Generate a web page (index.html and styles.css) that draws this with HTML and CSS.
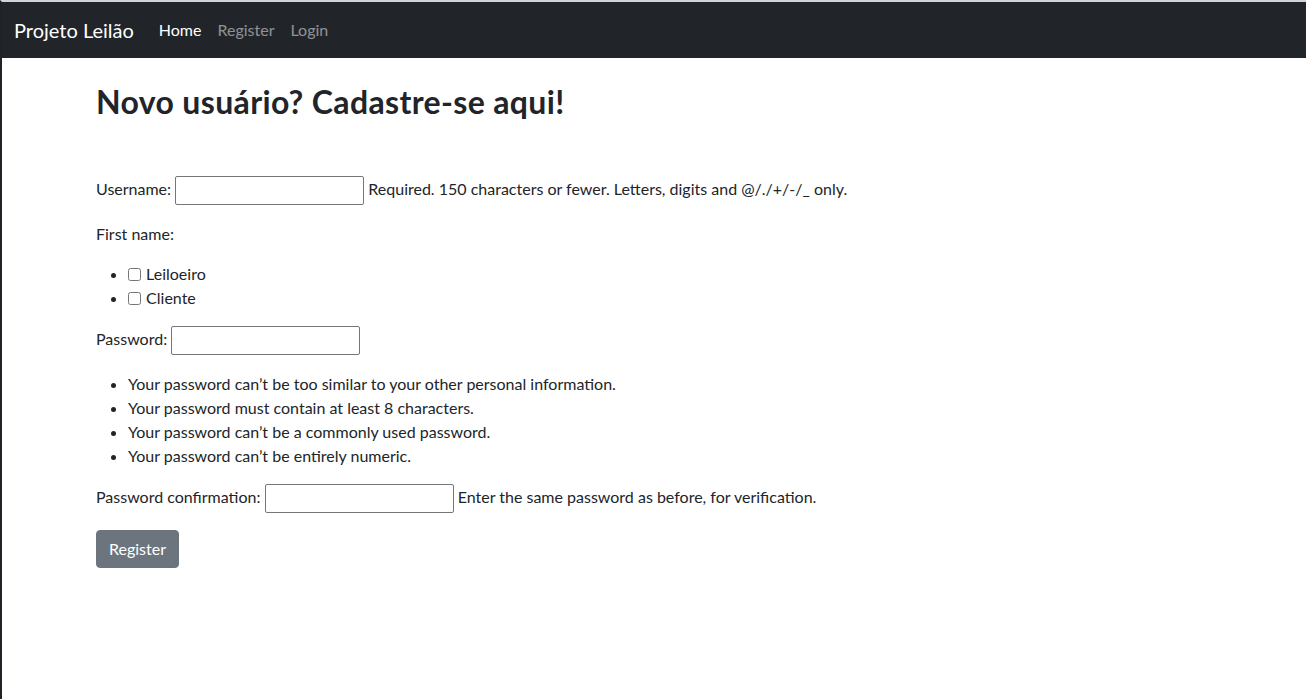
FILE: index.html
```html
<!DOCTYPE html>
<html lang="pt-br">
<head>
<meta charset="utf-8">
<title>Projeto Leilão</title>
<link rel="stylesheet" href="styles.css">
</head>
<body>
<div class="frame">
  <nav class="navbar">
    <a class="brand" href="#">Projeto Leilão</a>
    <ul class="nav">
      <li><a class="nav-link active" href="#">Home</a></li>
      <li><a class="nav-link" href="#">Register</a></li>
      <li><a class="nav-link" href="#">Login</a></li>
    </ul>
  </nav>
  <main class="container">
    <h1 class="title">Novo usuário? Cadastre-se aqui!</h1>
    <form class="form">
      <p class="row row-input"><label for="id_username">Username:</label> <input type="text" id="id_username" class="field"> <span class="helptext">Required. 150 characters or fewer. Letters, digits and @/./+/-/_ only.</span></p>
      <p class="row"><label>First name:</label></p>
      <ul class="list">
        <li><label><input type="checkbox" class="check"> Leiloeiro</label></li>
        <li><label><input type="checkbox" class="check"> Cliente</label></li>
      </ul>
      <p class="row row-input"><label for="id_password1">Password:</label> <input type="password" id="id_password1" class="field"></p>
      <ul class="list">
        <li>Your password can’t be too similar to your other personal information.</li>
        <li>Your password must contain at least 8 characters.</li>
        <li>Your password can’t be a commonly used password.</li>
        <li>Your password can’t be entirely numeric.</li>
      </ul>
      <p class="row row-input"><label for="id_password2">Password confirmation:</label> <input type="password" id="id_password2" class="field"> <span class="helptext">Enter the same password as before, for verification.</span></p>
      <button type="button" class="btn">Register</button>
    </form>
  </main>
</div>
</body>
</html>
```

FILE: styles.css
```css
* { box-sizing: border-box; }
html, body { margin: 0; padding: 0; height: 100%; }
body {
  font-family: "Lato", "Liberation Sans", sans-serif;
  font-size: 16px;
  line-height: 1.5;
  color: #212529;
  background: #fff;
}
.frame {
  min-height: 100%;
  border-top: 2px solid #cdd5d5;
  border-left: 2px solid #1f2226;
}
.navbar {
  display: flex;
  align-items: center;
  height: 56px;
  padding: 0 14px 0 12px;
  background: #212529;
}
.brand {
  color: #fff;
  text-decoration: none;
  font-size: 20px;
  line-height: 30px;
  margin-right: 17px;
}
.nav {
  display: flex;
  list-style: none;
  margin: 0;
  padding: 0;
}
.nav-link {
  display: block;
  padding: 8px 8px;
  color: rgba(255,255,255,.5);
  text-decoration: none;
}
.nav-link.active { color: #fff; }
.container {
  padding: 25px 0 0 94px;
}
.title {
  margin: 0 0 55px;
  font-size: 32px;
  font-weight: 700;
  line-height: 1.2;
  letter-spacing: 0.35px;
}
.form { margin: 0; }
.row { margin: 0 0 16px; }
.row-input { min-height: 30px; }
.field {
  width: 189px;
  height: 29px;
  margin: 0;
  padding: 1px 2px;
  font: inherit;
  vertical-align: middle;
  border: 1px solid #767676;
  border-radius: 2px;
  background: #fff;
}
.list {
  margin: 0 0 16px;
  padding-left: 32px;
}
.check {
  width: 13px;
  height: 13px;
  margin: 3px 1px 3px 0;
  vertical-align: -1px;
}
.btn {
  display: inline-block;
  height: 38px;
  padding: 6px 12px;
  font: inherit;
  color: #fff;
  background: #6c757d;
  border: 1px solid #6c757d;
  border-radius: 4px;
}
```
